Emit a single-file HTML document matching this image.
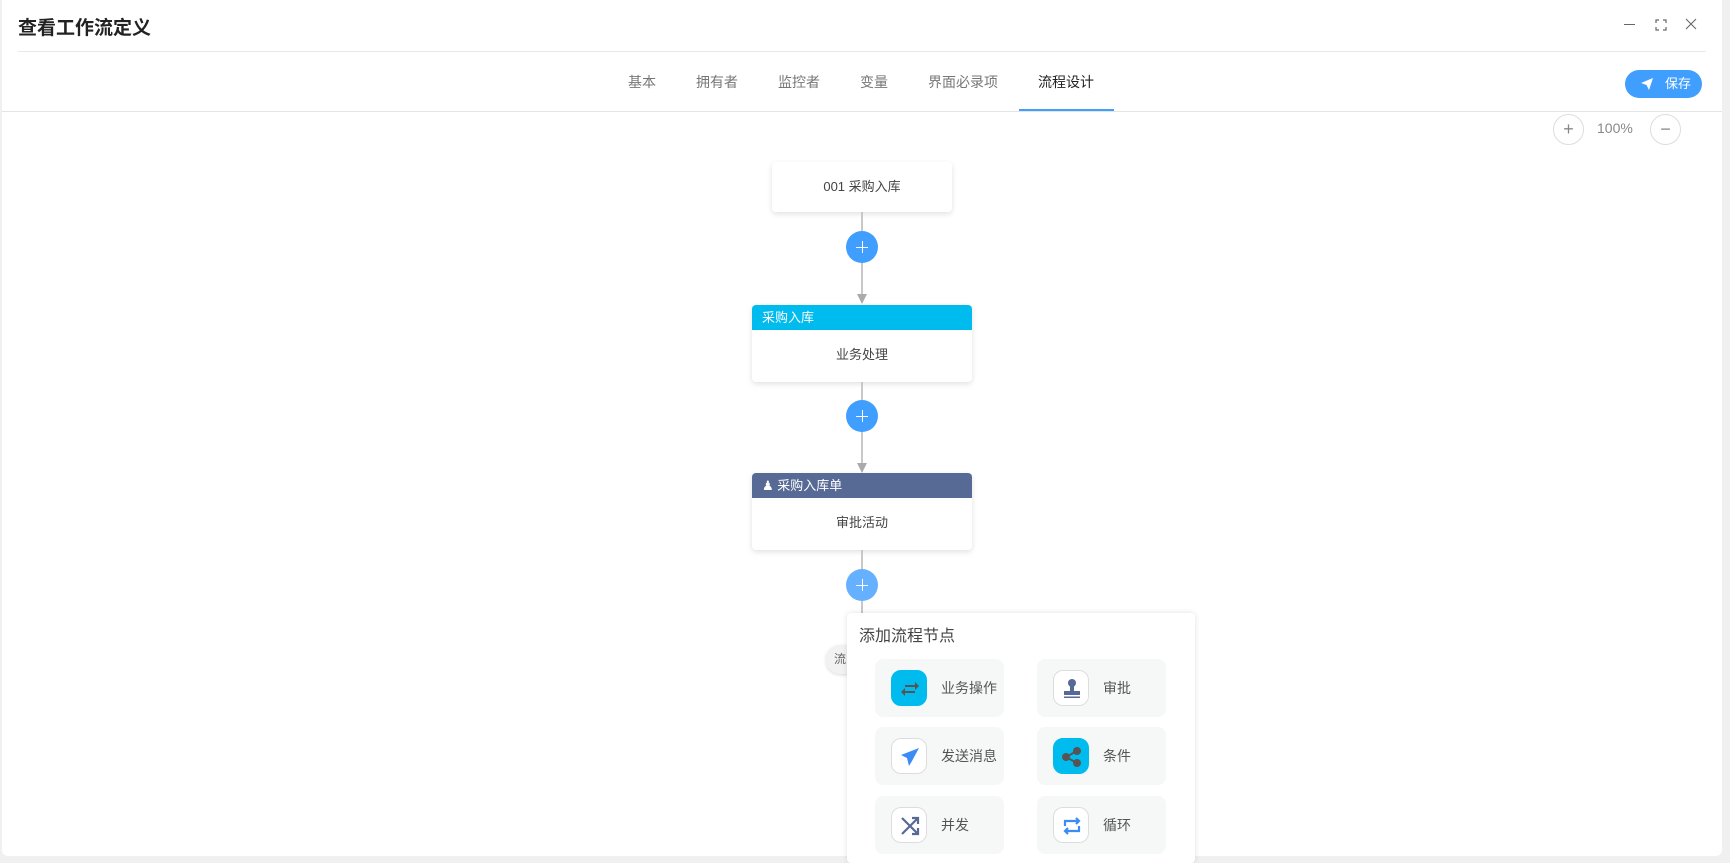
<!DOCTYPE html>
<html><head><meta charset="utf-8"><style>
*{box-sizing:border-box;margin:0;padding:0}
body{width:1730px;height:858px;overflow:hidden;background:#f0f0f0;font-family:"Liberation Sans","Noto Sans CJK SC",sans-serif;position:relative}
.a{position:absolute}
.dlg{left:2px;top:0;width:1720px;height:856px;background:#fff;border-radius:0 0 6px 6px}
.tab{top:72px;font-size:14px;color:#777}
.node{background:#fff;border-radius:4px;box-shadow:0 2px 6px rgba(0,0,0,.12);overflow:hidden}
.hd{height:25px;color:#fff;font-size:13px;line-height:25px;padding-left:10px}
.bd{text-align:center;font-size:13px;color:#444}
.vl{width:2px;background:#c8c8c8;left:861px}
.plus{width:32px;height:32px;border-radius:50%;background:#409eff;left:846px}
.plus:before{content:"";position:absolute;left:10px;top:15.5px;width:12px;height:1px;background:#fff}
.plus:after{content:"";position:absolute;left:15.5px;top:10px;width:1px;height:12px;background:#fff}
.arr{left:857px;width:0;height:0;border-left:5px solid transparent;border-right:5px solid transparent;border-top:10px solid #aaa}
.card{width:129px;height:58px;background:#f6f8f8;border-radius:8px}
.ic{position:absolute;left:16px;top:11px;width:36px;height:36px;border-radius:10px;border:1px solid #ddd;background:#fff}
.ic.f{background:#00bbee;border-color:#00bbee}
.ct{position:absolute;left:66px;top:19px;font-size:14px;color:#555}
.ic svg{position:absolute;left:7px;top:7px}
</style></head><body>
<div class="a dlg"></div>
<div class="a" style="left:18px;top:13px;font-size:19px;font-weight:bold;color:#222">查看工作流定义</div>
<div class="a" style="left:18px;top:51px;width:1688px;height:1px;background:#e8e8e8"></div>
<div class="a" style="left:1624px;top:24px;width:11px;height:1px;background:#666"></div>
<svg class="a" style="left:1655px;top:19px" width="12" height="12" viewBox="0 0 12 12" fill="none" stroke="#666" stroke-width="1.2"><path d="M1 4V1h3M8 1h3v3M11 8v3H8M4 11H1V8"/></svg>
<svg class="a" style="left:1685px;top:18px" width="12" height="12" viewBox="0 0 12 12" stroke="#666" stroke-width="1.1"><path d="M1 1l10 10M11 1L1 11"/></svg>
<div class="a tab" style="left:628px">基本</div>
<div class="a tab" style="left:696px">拥有者</div>
<div class="a tab" style="left:778px">监控者</div>
<div class="a tab" style="left:860px">变量</div>
<div class="a tab" style="left:928px">界面必录项</div>
<div class="a tab" style="left:1038px;color:#222">流程设计</div>
<div class="a" style="left:1019px;top:109px;width:95px;height:2px;background:#409eff"></div>
<div class="a" style="left:2px;top:111px;width:1720px;height:1px;background:#e4e4e4"></div>
<div class="a" style="left:1625px;top:70px;width:77px;height:28px;border-radius:14px;background:#409eff;color:#fff;font-size:13px;line-height:28px;padding-left:40px">保存</div>
<svg class="a" style="left:1641px;top:78px" width="12" height="12" viewBox="0 0 12 12"><path d="M0 5L12 0 8 12 5.5 7z" fill="#fff"/></svg>
<div class="a" style="left:1553px;top:114px;width:31px;height:31px;border-radius:50%;border:1px solid #ddd;text-align:center;line-height:28px;color:#888;font-size:18px">+</div>
<div class="a" style="left:1597px;top:120px;font-size:14px;color:#888">100%</div>
<div class="a" style="left:1650px;top:114px;width:31px;height:31px;border-radius:50%;border:1px solid #ddd;text-align:center;line-height:28px;color:#888;font-size:18px">−</div>

<div class="a node" style="left:772px;top:162px;width:180px;height:50px"><div class="bd" style="line-height:50px">001 采购入库</div></div>
<div class="a vl" style="top:212px;height:85px"></div>
<div class="a plus" style="top:231px"></div>
<div class="a arr" style="top:294px"></div>
<div class="a node" style="left:752px;top:305px;width:220px;height:77px"><div class="hd" style="background:#00bbee">采购入库</div><div class="bd" style="line-height:44px;margin-top:3px">业务处理</div></div>
<div class="a vl" style="top:382px;height:84px"></div>
<div class="a plus" style="top:400px"></div>
<div class="a arr" style="top:463px"></div>
<div class="a node" style="left:752px;top:473px;width:220px;height:77px"><div class="hd" style="background:#576a95">&#9823; 采购入库单</div><div class="bd" style="line-height:44px;margin-top:3px">审批活动</div></div>
<div class="a vl" style="top:550px;height:64px"></div>
<div class="a plus" style="top:569px;background:#66b1ff"></div>
<div class="a" style="left:826px;top:645px;width:40px;height:29px;border-radius:14px;background:#f2f2f2;box-shadow:0 1px 3px rgba(0,0,0,.15);font-size:12px;color:#666;line-height:29px;padding-left:8px">流</div>

<div class="a" style="left:847px;top:613px;width:348px;height:250px;background:#fff;border-radius:4px;box-shadow:0 0 6px rgba(0,0,0,.12)">
<div class="a" style="left:12px;top:9px;font-size:16px;color:#444">添加流程节点</div>
<div class="a card" style="left:28px;top:46px"><div class="ic f"><svg width="22" height="22" viewBox="0 0 22 22" fill="#555"><path d="M6 7h10v-3l4 4-4 4v-3H6z M16 15H6v3l-4-4 4-4v3h10z"/></svg></div><div class="ct">业务操作</div></div>
<div class="a card" style="left:190px;top:46px"><div class="ic"><svg width="22" height="22" viewBox="0 0 22 22" fill="#576a95"><circle cx="11" cy="5" r="4"/><path d="M9 8h4v5h6v4H3v-4h6z"/><rect x="3" y="18.5" width="16" height="1.5"/></svg></div><div class="ct">审批</div></div>
<div class="a card" style="left:28px;top:114px"><div class="ic"><svg width="22" height="22" viewBox="0 0 22 22" fill="#3b8cf5"><path d="M20 2L2 9l6 3 2 8 3-5z"/></svg></div><div class="ct">发送消息</div></div>
<div class="a card" style="left:190px;top:114px"><div class="ic f"><svg width="22" height="22" viewBox="0 0 22 22" fill="#555" stroke="#555" stroke-width="2"><circle cx="16" cy="5" r="3"/><circle cx="5" cy="11" r="3"/><circle cx="16" cy="17" r="3"/><path d="M16 5L5 11l11 6" fill="none"/></svg></div><div class="ct">条件</div></div>
<div class="a card" style="left:28px;top:183px"><div class="ic"><svg width="22" height="22" viewBox="0 0 22 22" fill="none" stroke="#576a95" stroke-width="2.2"><path d="M3 3l16 16M3 19L19 3M13 3h6v6M13 19h6v-6"/></svg></div><div class="ct">并发</div></div>
<div class="a card" style="left:190px;top:183px"><div class="ic"><svg width="22" height="22" viewBox="0 0 22 22" fill="none" stroke="#3b8cf5" stroke-width="2.2"><path d="M4 11V6h14M15 3l3 3-3 3M18 11v5H4M7 13l-3 3 3 3"/></svg></div><div class="ct">循环</div></div>
</div>
</body></html>
